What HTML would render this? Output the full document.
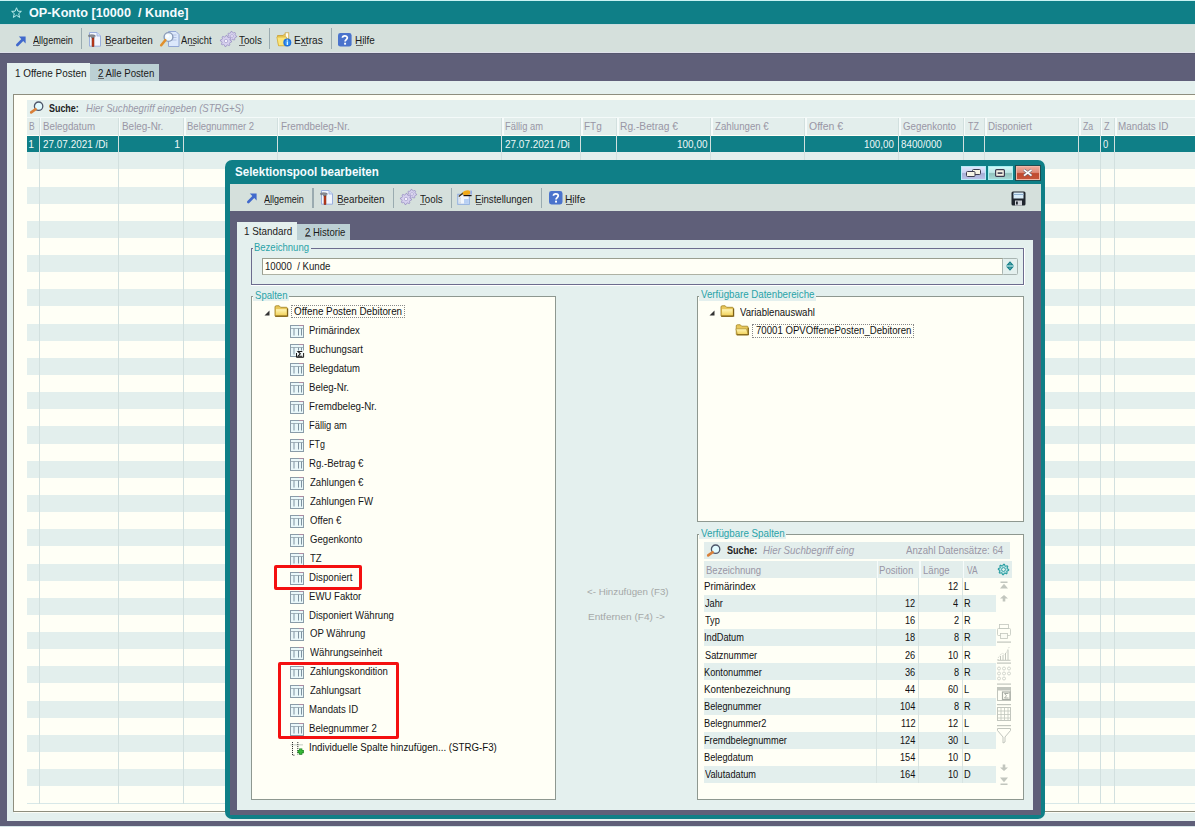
<!DOCTYPE html><html><head><meta charset="utf-8"><style>
*{margin:0;padding:0;box-sizing:border-box}
html,body{width:1195px;height:827px;overflow:hidden}
body{position:relative;background:#5f5f79;font-family:"Liberation Sans",sans-serif;font-size:10.5px;color:#1a1a1a}
.a{position:absolute}
.t{position:absolute;white-space:nowrap;line-height:1;transform-origin:0 0}
svg{position:absolute;overflow:visible}
</style></head><body>
<div class="a" style="left:0.00px;top:0.00px;width:1195.00px;height:1.00px;background:#c9f3f3"></div>
<div class="a" style="left:0.00px;top:1.00px;width:1195.00px;height:23.00px;background:#0f7f87"></div>
<svg style="left:11px;top:6.7px" width="11" height="11.3" viewBox="0 0 12 12"><polygon points="6,0.7 7.5,4.4 11.3,4.6 8.4,7.1 9.4,11.2 6,8.9 2.6,11.2 3.6,7.1 0.7,4.6 4.5,4.4" fill="none" stroke="#bff0ee" stroke-width="1.05" stroke-linejoin="round"/></svg>
<div class="t" style="left:29.00px;top:7.44px;font-size:12px;color:#f4fbff;font-weight:bold;transform:scaleX(1.0543);">OP-Konto [10000  / Kunde]</div>
<div class="a" style="left:0.00px;top:24.00px;width:1195.00px;height:1.00px;background:#cadde0"></div>
<div class="a" style="left:0.00px;top:25.00px;width:1195.00px;height:27.00px;background:#d5e0dc"></div>
<svg style="left:16px;top:35.5px" width="10" height="10" viewBox="0 0 10 10"><path d="M1.3 9 L6.8 3.5" stroke="#4169cc" stroke-width="2.6" stroke-linecap="round"/><path d="M2.8 0.6 H9.6 V7.4 Z" fill="#4169cc"/></svg>
<div class="t" style="left:32.60px;top:35.21px;font-size:10.5px;color:#1a1a1a;transform:scaleX(0.8652);">Allgemein</div>
<div class="a" style="left:33.00px;top:44.60px;width:7.00px;height:1.00px;background:#666"></div>
<div class="a" style="left:80.80px;top:28.00px;width:1.60px;height:21.00px;background:#9aabb0"></div>
<svg style="left:88px;top:31.5px" width="14" height="15" viewBox="0 0 14 15"><path d="M1.5 0.5 H9 L12.5 4 V14.2 H1.5 Z" fill="#f2f6ff" stroke="#9aaedc" stroke-width="1"/><path d="M9 0.5 V4 H12.5" fill="#cfe0f8" stroke="#9aaedc" stroke-width="0.8"/><path d="M0.5 3.2 Q3 2.2 6.5 3 L7.5 4.2 H6.2 V6 H3.5 V4.6 L0.8 4.8 Z" fill="#8a8e96" stroke="#5c6068" stroke-width="0.5"/><path d="M4 6 H6 V14.5 H4 Z" fill="#c23c1c" stroke="#7a2410" stroke-width="0.5"/></svg>
<div class="t" style="left:105.06px;top:35.21px;font-size:10.5px;color:#1a1a1a;transform:scaleX(0.9400);">Bearbeiten</div>
<div class="a" style="left:106.00px;top:44.60px;width:7.00px;height:1.00px;background:#666"></div>
<svg style="left:159.5px;top:30.5px" width="20" height="16" viewBox="0 0 20 16"><path d="M8.5 0.5 H16 L19 3.5 V15.5 H8.5 Z" fill="#dce8fb" stroke="#93a8d6"/><path d="M11 4 H16.5 M11 6.5 H16.5 M11 9 H16.5" stroke="#a8b8e0" stroke-width="0.8"/><circle cx="8.5" cy="6" r="4.4" fill="#eef8ff" stroke="#8a9ab8" stroke-width="1.4"/><circle cx="7.5" cy="5" r="1.6" fill="#ffffff"/><path d="M5.3 9.2 L1.2 14.2" stroke="#e0902e" stroke-width="2.6" stroke-linecap="round"/></svg>
<div class="t" style="left:180.50px;top:35.21px;font-size:10.5px;color:#1a1a1a;transform:scaleX(0.8857);">Ansicht</div>
<div class="a" style="left:188.50px;top:44.60px;width:6.00px;height:1.00px;background:#666"></div>
<svg style="left:220px;top:31px" width="17" height="16" viewBox="0 0 17 16"><path d="M16.60 5.00 L16.48 6.02 L15.06 6.48 L14.66 7.12 L14.87 8.60 L14.00 9.14 L12.76 8.31 L12.00 8.40 L10.98 9.48 L10.00 9.14 L9.88 7.66 L9.34 7.12 L7.86 7.00 L7.52 6.02 L8.60 5.00 L8.69 4.24 L7.86 3.00 L8.40 2.13 L9.88 2.34 L10.52 1.94 L10.98 0.52 L12.00 0.40 L12.76 1.69 L13.48 1.94 L14.87 1.40 L15.60 2.13 L15.06 3.52 L15.31 4.24 Z" fill="#d6d0ee" stroke="#9a92c4" stroke-width="0.8"/><circle cx="12" cy="5" r="1.4" fill="#f4f2fc" stroke="#9a92c4" stroke-width="0.6"/><path d="M11.60 10.00 L11.49 11.09 L9.88 11.61 L9.49 12.33 L9.96 13.96 L9.11 14.66 L7.61 13.88 L6.82 14.12 L6.00 15.60 L4.91 15.49 L4.39 13.88 L3.67 13.49 L2.04 13.96 L1.34 13.11 L2.12 11.61 L1.88 10.82 L0.40 10.00 L0.51 8.91 L2.12 8.39 L2.51 7.67 L2.04 6.04 L2.89 5.34 L4.39 6.12 L5.18 5.88 L6.00 4.40 L7.09 4.51 L7.61 6.12 L8.33 6.51 L9.96 6.04 L10.66 6.89 L9.88 8.39 L10.12 9.18 Z" fill="#d6d0ee" stroke="#9a92c4" stroke-width="0.8"/><circle cx="6" cy="10" r="1.7" fill="#f4f2fc" stroke="#9a92c4" stroke-width="0.6"/></svg>
<div class="t" style="left:239.00px;top:35.21px;font-size:10.5px;color:#1a1a1a;transform:scaleX(0.9292);">Tools</div>
<div class="a" style="left:239.00px;top:44.60px;width:6.00px;height:1.00px;background:#666"></div>
<div class="a" style="left:268.80px;top:28.00px;width:1.60px;height:21.00px;background:#9aabb0"></div>
<svg style="left:276px;top:32px" width="16" height="16" viewBox="0 0 16 16"><path d="M1.5 3.5 H7 L8.5 2.2 H12.5 V13.5 H2.5 Z" fill="#f0cf58" stroke="#c9a23a" stroke-width="0.9"/><rect x="9.2" y="0.8" width="3.6" height="6" fill="#fffdf0" stroke="#c9a23a" stroke-width="0.7"/><path d="M0.8 5 H10.5 L11.8 13.8 H2.6 Z" fill="#fbe57a" stroke="#d2ac38" stroke-width="0.7"/><circle cx="11.3" cy="10.5" r="4" fill="#1f72de"/><circle cx="11.3" cy="10.5" r="2.6" fill="#3590f0"/><rect x="10.7" y="9.4" width="1.3" height="3.6" fill="#d8f8ff"/><rect x="10.7" y="7.6" width="1.3" height="1.1" fill="#d8f8ff"/></svg>
<div class="t" style="left:293.53px;top:35.21px;font-size:10.5px;color:#1a1a1a;transform:scaleX(0.9655);">Extras</div>
<div class="a" style="left:301.00px;top:44.60px;width:6.00px;height:1.00px;background:#666"></div>
<div class="a" style="left:330.80px;top:28.00px;width:1.60px;height:21.00px;background:#9aabb0"></div>
<svg style="left:338.2px;top:32.8px" width="13.6" height="13.6" viewBox="0 0 14 14"><rect x="0" y="0" width="14" height="14" rx="2.5" fill="#4a73cc"/><path d="M4.6 5.0 C4.6 2.2 9.6 2.2 9.6 5.0 C9.6 6.8 7.3 6.9 7.3 8.8" fill="none" stroke="#fff" stroke-width="1.8"/><rect x="6.3" y="10" width="2" height="2" fill="#fff"/></svg>
<div class="t" style="left:355.06px;top:35.21px;font-size:10.5px;color:#1a1a1a;transform:scaleX(0.9400);">Hilfe</div>
<div class="a" style="left:356.00px;top:44.60px;width:7.00px;height:1.00px;background:#666"></div>
<div class="a" style="left:0.00px;top:52.00px;width:1195.00px;height:1.40px;background:#dfe0ea"></div>
<div class="a" style="left:0.00px;top:53.40px;width:1195.00px;height:1.00px;background:#56576f"></div>
<div class="a" style="left:7.00px;top:81.00px;width:1188.00px;height:740.00px;background:#e4f0ee"></div>
<div class="a" style="left:7.00px;top:62.80px;width:83.40px;height:19.00px;background:#e4f0ee"></div>
<div class="a" style="left:90.40px;top:64.30px;width:68.50px;height:17.00px;background:#bcd0d4"></div>
<div class="t" style="left:14.66px;top:67.51px;font-size:10.5px;color:#1a1a1a;transform:scaleX(0.9446);">1 Offene Posten</div>
<div class="t" style="left:98.00px;top:68.01px;font-size:10.5px;color:#1a1a1a;transform:scaleX(0.9180);">2 Alle Posten</div>
<div class="a" style="left:98.00px;top:77.50px;width:6.00px;height:1.00px;background:#666"></div>
<div class="a" style="left:0.00px;top:825.60px;width:1195.00px;height:1.40px;background:#d6e6e8"></div>
<div class="a" style="left:13.00px;top:94.00px;width:1182.00px;height:718.00px;background:#fffff6;border-left:1px solid #8e8e7e;border-top:1px solid #8e8e7e;border-bottom:1px solid #8e8e7e"></div>
<div class="a" style="left:27.00px;top:99.50px;width:1168.00px;height:17.00px;background:#e4f0ee"></div>
<svg style="left:30px;top:101.3px" width="14" height="12" viewBox="0 0 14 12"><circle cx="8.6" cy="5.2" r="4.2" fill="#e2fbff" stroke="#4e566a" stroke-width="1.3"/><path d="M5.6 8.2 L1.2 11.4" stroke="#d9803a" stroke-width="2.6" stroke-linecap="round"/></svg>
<div class="t" style="left:49.40px;top:102.61px;font-size:10.5px;color:#222;font-weight:bold;transform:scaleX(0.8500);">Suche:</div>
<div class="t" style="left:85.90px;top:102.61px;font-size:10.5px;color:#9a98a8;font-style:italic;transform:scaleX(0.9103);">Hier Suchbegriff eingeben (STRG+S)</div>
<div class="a" style="left:27.00px;top:117.00px;width:1168.00px;height:18.30px;background:#e3eeec;border-top:1px solid #f4faf9"></div>
<div class="a" style="left:27.00px;top:135.70px;width:1168.00px;height:16.54px;background:#0f7f87"></div>
<div class="a" style="left:27.00px;top:152.24px;width:1168.00px;height:17.14px;background:#e3efed"></div>
<div class="a" style="left:27.00px;top:186.51px;width:1168.00px;height:17.14px;background:#e3efed"></div>
<div class="a" style="left:27.00px;top:220.78px;width:1168.00px;height:17.14px;background:#e3efed"></div>
<div class="a" style="left:27.00px;top:255.05px;width:1168.00px;height:17.14px;background:#e3efed"></div>
<div class="a" style="left:27.00px;top:289.32px;width:1168.00px;height:17.14px;background:#e3efed"></div>
<div class="a" style="left:27.00px;top:323.60px;width:1168.00px;height:17.14px;background:#e3efed"></div>
<div class="a" style="left:27.00px;top:357.87px;width:1168.00px;height:17.14px;background:#e3efed"></div>
<div class="a" style="left:27.00px;top:392.14px;width:1168.00px;height:17.14px;background:#e3efed"></div>
<div class="a" style="left:27.00px;top:426.41px;width:1168.00px;height:17.14px;background:#e3efed"></div>
<div class="a" style="left:27.00px;top:460.68px;width:1168.00px;height:17.14px;background:#e3efed"></div>
<div class="a" style="left:27.00px;top:494.96px;width:1168.00px;height:17.14px;background:#e3efed"></div>
<div class="a" style="left:27.00px;top:529.23px;width:1168.00px;height:17.14px;background:#e3efed"></div>
<div class="a" style="left:27.00px;top:563.50px;width:1168.00px;height:17.14px;background:#e3efed"></div>
<div class="a" style="left:27.00px;top:597.77px;width:1168.00px;height:17.14px;background:#e3efed"></div>
<div class="a" style="left:27.00px;top:632.04px;width:1168.00px;height:17.14px;background:#e3efed"></div>
<div class="a" style="left:27.00px;top:666.32px;width:1168.00px;height:17.14px;background:#e3efed"></div>
<div class="a" style="left:27.00px;top:700.59px;width:1168.00px;height:17.14px;background:#e3efed"></div>
<div class="a" style="left:27.00px;top:734.86px;width:1168.00px;height:17.14px;background:#e3efed"></div>
<div class="a" style="left:27.00px;top:769.13px;width:1168.00px;height:17.14px;background:#e3efed"></div>
<div class="a" style="left:27.00px;top:802.90px;width:1168.00px;height:1.00px;background:#d8e8e8"></div>
<div class="a" style="left:14.00px;top:812.00px;width:1181.00px;height:1.00px;background:#fbfdf6"></div>
<div class="a" style="left:38.50px;top:117.50px;width:1.00px;height:686.40px;background:#d2e0df"></div>
<div class="a" style="left:39.50px;top:117.50px;width:1.50px;height:17.80px;background:#f6fbfa"></div>
<div class="a" style="left:117.80px;top:117.50px;width:1.00px;height:686.40px;background:#d2e0df"></div>
<div class="a" style="left:118.80px;top:117.50px;width:1.50px;height:17.80px;background:#f6fbfa"></div>
<div class="a" style="left:183.00px;top:117.50px;width:1.00px;height:686.40px;background:#d2e0df"></div>
<div class="a" style="left:184.00px;top:117.50px;width:1.50px;height:17.80px;background:#f6fbfa"></div>
<div class="a" style="left:276.90px;top:117.50px;width:1.00px;height:686.40px;background:#d2e0df"></div>
<div class="a" style="left:277.90px;top:117.50px;width:1.50px;height:17.80px;background:#f6fbfa"></div>
<div class="a" style="left:501.30px;top:117.50px;width:1.00px;height:686.40px;background:#d2e0df"></div>
<div class="a" style="left:502.30px;top:117.50px;width:1.50px;height:17.80px;background:#f6fbfa"></div>
<div class="a" style="left:580.20px;top:117.50px;width:1.00px;height:686.40px;background:#d2e0df"></div>
<div class="a" style="left:581.20px;top:117.50px;width:1.50px;height:17.80px;background:#f6fbfa"></div>
<div class="a" style="left:616.30px;top:117.50px;width:1.00px;height:686.40px;background:#d2e0df"></div>
<div class="a" style="left:617.30px;top:117.50px;width:1.50px;height:17.80px;background:#f6fbfa"></div>
<div class="a" style="left:710.00px;top:117.50px;width:1.00px;height:686.40px;background:#d2e0df"></div>
<div class="a" style="left:711.00px;top:117.50px;width:1.50px;height:17.80px;background:#f6fbfa"></div>
<div class="a" style="left:804.10px;top:117.50px;width:1.00px;height:686.40px;background:#d2e0df"></div>
<div class="a" style="left:805.10px;top:117.50px;width:1.50px;height:17.80px;background:#f6fbfa"></div>
<div class="a" style="left:898.00px;top:117.50px;width:1.00px;height:686.40px;background:#d2e0df"></div>
<div class="a" style="left:899.00px;top:117.50px;width:1.50px;height:17.80px;background:#f6fbfa"></div>
<div class="a" style="left:962.80px;top:117.50px;width:1.00px;height:686.40px;background:#d2e0df"></div>
<div class="a" style="left:963.80px;top:117.50px;width:1.50px;height:17.80px;background:#f6fbfa"></div>
<div class="a" style="left:984.10px;top:117.50px;width:1.00px;height:686.40px;background:#d2e0df"></div>
<div class="a" style="left:985.10px;top:117.50px;width:1.50px;height:17.80px;background:#f6fbfa"></div>
<div class="a" style="left:1078.00px;top:117.50px;width:1.00px;height:686.40px;background:#d2e0df"></div>
<div class="a" style="left:1079.00px;top:117.50px;width:1.50px;height:17.80px;background:#f6fbfa"></div>
<div class="a" style="left:1099.50px;top:117.50px;width:1.00px;height:686.40px;background:#d2e0df"></div>
<div class="a" style="left:1100.50px;top:117.50px;width:1.50px;height:17.80px;background:#f6fbfa"></div>
<div class="a" style="left:1114.20px;top:117.50px;width:1.00px;height:686.40px;background:#d2e0df"></div>
<div class="a" style="left:1115.20px;top:117.50px;width:1.50px;height:17.80px;background:#f6fbfa"></div>
<div class="t" style="left:28.97px;top:122.06px;font-size:10.2px;color:#9996a5;transform:scaleX(0.8333);">B</div>
<div class="t" style="left:42.54px;top:122.06px;font-size:10.2px;color:#9996a5;transform:scaleX(0.9566);">Belegdatum</div>
<div class="t" style="left:122.33px;top:122.06px;font-size:10.2px;color:#9996a5;transform:scaleX(0.9732);">Beleg-Nr.</div>
<div class="t" style="left:187.27px;top:122.06px;font-size:10.2px;color:#9996a5;transform:scaleX(0.9338);">Belegnummer 2</div>
<div class="t" style="left:280.73px;top:122.06px;font-size:10.2px;color:#9996a5;transform:scaleX(0.9710);">Fremdbeleg-Nr.</div>
<div class="t" style="left:504.68px;top:122.06px;font-size:10.2px;color:#9996a5;transform:scaleX(0.9175);">Fällig am</div>
<div class="t" style="left:583.72px;top:122.06px;font-size:10.2px;color:#9996a5;transform:scaleX(0.9765);">FTg</div>
<div class="t" style="left:620.10px;top:122.06px;font-size:10.2px;color:#9996a5;transform:scaleX(1.0035);">Rg.-Betrag €</div>
<div class="t" style="left:715.20px;top:122.06px;font-size:10.2px;color:#9996a5;transform:scaleX(0.9474);">Zahlungen €</div>
<div class="t" style="left:808.90px;top:122.06px;font-size:10.2px;color:#9996a5;transform:scaleX(1.0273);">Offen €</div>
<div class="t" style="left:902.50px;top:122.06px;font-size:10.2px;color:#9996a5;transform:scaleX(0.9545);">Gegenkonto</div>
<div class="t" style="left:967.80px;top:122.06px;font-size:10.2px;color:#9996a5;transform:scaleX(0.8750);">TZ</div>
<div class="t" style="left:988.14px;top:122.06px;font-size:10.2px;color:#9996a5;transform:scaleX(0.9600);">Disponiert</div>
<div class="t" style="left:1083.20px;top:122.06px;font-size:10.2px;color:#9996a5;transform:scaleX(0.8583);">Za</div>
<div class="t" style="left:1104.40px;top:122.06px;font-size:10.2px;color:#9996a5;transform:scaleX(0.9000);">Z</div>
<div class="t" style="left:1117.83px;top:122.06px;font-size:10.2px;color:#9996a5;transform:scaleX(0.9667);">Mandats ID</div>
<div class="t" style="left:28.20px;top:139.21px;font-size:10.5px;color:#eef8f8;">1</div>
<div class="t" style="left:42.80px;top:139.21px;font-size:10.5px;color:#eef8f8;transform:scaleX(0.9471);">27.07.2021 /Di</div>
<div class="t" style="left:174.20px;top:139.21px;font-size:10.5px;color:#eef8f8;">1</div>
<div class="t" style="left:504.60px;top:139.21px;font-size:10.5px;color:#eef8f8;transform:scaleX(0.9485);">27.07.2021 /Di</div>
<div class="t" style="left:676.85px;top:139.21px;font-size:10.5px;color:#eef8f8;transform:scaleX(0.9484);">100,00</div>
<div class="t" style="left:864.47px;top:139.21px;font-size:10.5px;color:#eef8f8;transform:scaleX(0.9290);">100,00</div>
<div class="t" style="left:901.00px;top:139.21px;font-size:10.5px;color:#eef8f8;transform:scaleX(0.9318);">8400/000</div>
<div class="t" style="left:1102.80px;top:139.21px;font-size:10.5px;color:#eef8f8;transform:scaleX(0.9000);">0</div>
<div class="a" style="left:225.00px;top:160.00px;width:820.00px;height:658.50px;background:#0f7f87;border-radius:7px"></div>
<div class="t" style="left:235.10px;top:165.74px;font-size:12px;color:#f4fbff;font-weight:bold;transform:scaleX(0.9631);">Selektionspool bearbeiten</div>
<div class="a" style="left:961px;top:166px;width:25px;height:14px;background:linear-gradient(#dfe6fc 0%,#cdd4f4 45%,#a6aed6 55%,#b9c1e8 100%);border:1px solid #b8ecf8"></div>
<svg style="left:966px;top:169px" width="15" height="8" viewBox="0 0 15 8"><rect x="6.5" y="0.5" width="8" height="5" rx="1" fill="#f6f4e6" stroke="#3c3c50"/><rect x="0.5" y="2.5" width="8.5" height="5" rx="1" fill="#f6f4e6" stroke="#3c3c50"/></svg>
<div class="a" style="left:988px;top:166px;width:25px;height:14px;background:linear-gradient(#cff6f6 0%,#bfe8e6 45%,#90c2bc 55%,#a8dad6 100%);border:1px solid #a8f0f0"></div>
<svg style="left:995px;top:169px" width="10" height="8" viewBox="0 0 10 8"><rect x="0.6" y="0.6" width="8.8" height="6.8" rx="1" fill="#f6f4e6" stroke="#3c3c50" stroke-width="1.2"/><rect x="2.6" y="3.3" width="4.8" height="1.6" fill="#3c3c50"/></svg>
<div class="a" style="left:1015.5px;top:166px;width:24.5px;height:14px;background:linear-gradient(#eaa898 0%,#de8a78 45%,#c04a30 55%,#c4543a 100%);border:1px solid #f0b8a8;outline:1px solid #1f4c50"></div>
<svg style="left:1023px;top:169px" width="9.5" height="7.5" viewBox="0 0 9.5 7.5"><path d="M1 0.8 L8.5 6.7 M8.5 0.8 L1 6.7" stroke="#6a6a78" stroke-width="2.8"/><path d="M1 0.8 L8.5 6.7 M8.5 0.8 L1 6.7" stroke="#fff" stroke-width="1.7"/></svg>
<div class="a" style="left:229.50px;top:183.50px;width:811.50px;height:27.50px;background:#d5e0dc"></div>
<div class="a" style="left:229.50px;top:211.00px;width:811.50px;height:603.50px;background:#5f5f79"></div>
<svg style="left:247px;top:193.3px" width="10" height="10" viewBox="0 0 10 10"><path d="M1.3 9 L6.8 3.5" stroke="#4169cc" stroke-width="2.6" stroke-linecap="round"/><path d="M2.8 0.6 H9.6 V7.4 Z" fill="#4169cc"/></svg>
<div class="t" style="left:264.30px;top:194.11px;font-size:10.5px;color:#1a1a1a;transform:scaleX(0.8630);">Allgemein</div>
<div class="a" style="left:264.50px;top:203.50px;width:7.00px;height:1.00px;background:#666"></div>
<div class="a" style="left:312.30px;top:187.50px;width:1.60px;height:20.00px;background:#9aabb0"></div>
<svg style="left:320px;top:190.2px" width="14" height="15" viewBox="0 0 14 15"><path d="M1.5 0.5 H9 L12.5 4 V14.2 H1.5 Z" fill="#f2f6ff" stroke="#9aaedc" stroke-width="1"/><path d="M9 0.5 V4 H12.5" fill="#cfe0f8" stroke="#9aaedc" stroke-width="0.8"/><path d="M0.5 3.2 Q3 2.2 6.5 3 L7.5 4.2 H6.2 V6 H3.5 V4.6 L0.8 4.8 Z" fill="#8a8e96" stroke="#5c6068" stroke-width="0.5"/><path d="M4 6 H6 V14.5 H4 Z" fill="#c23c1c" stroke="#7a2410" stroke-width="0.5"/></svg>
<div class="t" style="left:337.06px;top:194.11px;font-size:10.5px;color:#1a1a1a;transform:scaleX(0.9360);">Bearbeiten</div>
<div class="a" style="left:338.00px;top:203.50px;width:7.00px;height:1.00px;background:#666"></div>
<div class="a" style="left:392.80px;top:187.50px;width:1.60px;height:20.00px;background:#9aabb0"></div>
<svg style="left:399.5px;top:189px" width="17" height="16" viewBox="0 0 17 16"><path d="M16.60 5.00 L16.48 6.02 L15.06 6.48 L14.66 7.12 L14.87 8.60 L14.00 9.14 L12.76 8.31 L12.00 8.40 L10.98 9.48 L10.00 9.14 L9.88 7.66 L9.34 7.12 L7.86 7.00 L7.52 6.02 L8.60 5.00 L8.69 4.24 L7.86 3.00 L8.40 2.13 L9.88 2.34 L10.52 1.94 L10.98 0.52 L12.00 0.40 L12.76 1.69 L13.48 1.94 L14.87 1.40 L15.60 2.13 L15.06 3.52 L15.31 4.24 Z" fill="#d6d0ee" stroke="#9a92c4" stroke-width="0.8"/><circle cx="12" cy="5" r="1.4" fill="#f4f2fc" stroke="#9a92c4" stroke-width="0.6"/><path d="M11.60 10.00 L11.49 11.09 L9.88 11.61 L9.49 12.33 L9.96 13.96 L9.11 14.66 L7.61 13.88 L6.82 14.12 L6.00 15.60 L4.91 15.49 L4.39 13.88 L3.67 13.49 L2.04 13.96 L1.34 13.11 L2.12 11.61 L1.88 10.82 L0.40 10.00 L0.51 8.91 L2.12 8.39 L2.51 7.67 L2.04 6.04 L2.89 5.34 L4.39 6.12 L5.18 5.88 L6.00 4.40 L7.09 4.51 L7.61 6.12 L8.33 6.51 L9.96 6.04 L10.66 6.89 L9.88 8.39 L10.12 9.18 Z" fill="#d6d0ee" stroke="#9a92c4" stroke-width="0.8"/><circle cx="6" cy="10" r="1.7" fill="#f4f2fc" stroke="#9a92c4" stroke-width="0.6"/></svg>
<div class="t" style="left:420.00px;top:194.11px;font-size:10.5px;color:#1a1a1a;transform:scaleX(0.9250);">Tools</div>
<div class="a" style="left:420.00px;top:203.50px;width:6.00px;height:1.00px;background:#666"></div>
<div class="a" style="left:450.80px;top:187.50px;width:1.60px;height:20.00px;background:#9aabb0"></div>
<svg style="left:457px;top:189.5px" width="16" height="15" viewBox="0 0 16 15"><rect x="0.8" y="4.3" width="11.5" height="10" fill="#f2f6fc" stroke="#90aee0" stroke-width="1.1"/><rect x="7" y="9" width="4.8" height="4.8" fill="#b8d0f4"/><path d="M3 8 V13 M2 8 H4 M2 13 H4" stroke="#c8d0d8" stroke-width="0.8"/><path d="M1.8 6.6 L6.5 2.8" stroke="#3a2a10" stroke-width="1.3"/><ellipse cx="9.6" cy="2.8" rx="4" ry="2.3" fill="#f0a818" transform="rotate(-12 9.6 2.8)"/><path d="M6.5 5.6 H14.6" stroke="#1a1010" stroke-width="1.2"/><rect x="13.3" y="0.6" width="1.6" height="4" fill="#90a8e8"/></svg>
<div class="t" style="left:474.79px;top:194.11px;font-size:10.5px;color:#1a1a1a;transform:scaleX(0.9129);">Einstellungen</div>
<div class="a" style="left:476.00px;top:203.50px;width:6.00px;height:1.00px;background:#666"></div>
<div class="a" style="left:540.80px;top:187.50px;width:1.60px;height:20.00px;background:#9aabb0"></div>
<svg style="left:548.7px;top:191px" width="13.5" height="13.5" viewBox="0 0 14 14"><rect x="0" y="0" width="14" height="14" rx="2.5" fill="#4a73cc"/><path d="M4.6 5.0 C4.6 2.2 9.6 2.2 9.6 5.0 C9.6 6.8 7.3 6.9 7.3 8.8" fill="none" stroke="#fff" stroke-width="1.8"/><rect x="6.3" y="10" width="2" height="2" fill="#fff"/></svg>
<div class="t" style="left:564.74px;top:194.11px;font-size:10.5px;color:#1a1a1a;transform:scaleX(0.9650);">Hilfe</div>
<div class="a" style="left:566.00px;top:203.50px;width:7.00px;height:1.00px;background:#666"></div>
<svg style="left:1011px;top:191.4px" width="15" height="15" viewBox="0 0 15 15"><rect x="0.5" y="0.5" width="14" height="14" rx="1.5" fill="#20262e"/><rect x="2.5" y="1.5" width="10" height="6" fill="#d8ecf8"/><rect x="2.5" y="3" width="10" height="1" fill="#8fb0d0"/><rect x="4" y="9.5" width="7" height="5" fill="#d0d4da"/><rect x="5" y="10.5" width="1.8" height="3" fill="#20262e"/></svg>
<div class="a" style="left:237.00px;top:239.50px;width:795.70px;height:570.00px;background:#e4f0ee"></div>
<div class="a" style="left:237.00px;top:221.70px;width:60.40px;height:19.00px;background:#e4f0ee"></div>
<div class="a" style="left:297.40px;top:223.50px;width:52.30px;height:16.00px;background:#bcd0d4"></div>
<div class="t" style="left:244.06px;top:226.21px;font-size:10.5px;color:#1a1a1a;transform:scaleX(0.9400);">1 Standard</div>
<div class="t" style="left:305.00px;top:226.81px;font-size:10.5px;color:#1a1a1a;transform:scaleX(0.9091);">2 Historie</div>
<div class="a" style="left:305.00px;top:236.30px;width:6.00px;height:1.00px;background:#666"></div>
<div class="a" style="left:251.00px;top:248.00px;width:773.00px;height:36.70px;border:1px solid #6c6c8e;"></div>
<div class="a" style="left:1024.00px;top:248.00px;width:1.00px;height:37.00px;background:#ffffff"></div>
<div class="a" style="left:251.00px;top:284.70px;width:773.00px;height:1.00px;background:#ffffff"></div>
<div class="a" style="left:252.90px;top:243.00px;width:58.10px;height:10.00px;background:#e4f0ee"></div>
<div class="t" style="left:253.97px;top:242.86px;font-size:10.2px;color:#2aa3a8;transform:scaleX(0.9328);">Bezeichnung</div>
<div class="a" style="left:262.00px;top:258.00px;width:741.00px;height:16.50px;background:#fffff6;border:1px solid #aeb2a4;border-top-color:#9a9e90;border-left-color:#9a9e90;border-right:none"></div>
<div class="a" style="left:1002.00px;top:258.00px;width:16.00px;height:16.50px;background:#e4f0ee;border:1.2px solid #a9b5b2;border-radius:1.5px"></div>
<svg style="left:1006px;top:261px" width="8" height="10" viewBox="0 0 8 10"><path d="M4 0.2 L7.9 4.6 H0.1 Z M0.1 5.4 H7.9 L4 9.8 Z" fill="#127e86"/><path d="M0.4 4.2 H7.6 V5.8 H0.4 Z" fill="#84c4c8"/><path d="M2.5 3.5 L4 1.8 L5.5 3.5 Z M2.5 6.5 H5.5 L4 8.2 Z" fill="#5aa8ae"/></svg>
<div class="t" style="left:265.05px;top:261.66px;font-size:10.2px;color:#1a1a1a;transform:scaleX(0.9471);">10000  / Kunde</div>
<div class="a" style="left:251.00px;top:295.80px;width:304.70px;height:504.30px;border:1px solid #8e9890;background:#fffff6;"></div>
<div class="a" style="left:253.00px;top:291.30px;width:36.00px;height:10.00px;background:#e4f0ee"></div>
<div class="t" style="left:255.00px;top:291.16px;font-size:10.2px;color:#2aa3a8;transform:scaleX(0.9412);">Spalten</div>
<svg style="left:263.5px;top:309.5px" width="6" height="6" viewBox="0 0 6 6"><path d="M5.5 0.5 V5.5 H0.5 Z" fill="#333"/></svg>
<svg style="left:274.2px;top:305px" width="15" height="12" viewBox="0 0 15 12"><defs><linearGradient id="fg1" x1="0" y1="0" x2="0" y2="1"><stop offset="0" stop-color="#fff6b8"/><stop offset="1" stop-color="#f2d25a"/></linearGradient></defs><path d="M1 2 Q1 0.8 2.2 0.8 H5.2 L6.6 2.3 H12.3 Q13.3 2.3 13.3 3.3 V10.6 Q13.3 11.4 12.5 11.4 H1.8 Q1 11.4 1 10.6 Z" fill="#e9c75a" stroke="#a88a2c" stroke-width="0.9"/><path d="M2 4.2 H12.6 V10.5 H2 Z" fill="url(#fg1)"/><path d="M1.2 11.2 H13.6 V3.6" fill="none" stroke="#7d6018" stroke-width="1.2"/></svg>
<div class="a" style="left:291.10px;top:305.40px;width:113.80px;height:12.60px;border:1px dotted #888"></div>
<div class="t" style="left:293.80px;top:307.23px;font-size:10px;color:#111;transform:scaleX(0.9836);">Offene Posten Debitoren</div>
<svg style="left:290px;top:325.1px" width="14" height="13" viewBox="0 0 14 13"><rect x="0.5" y="0.5" width="13" height="12" fill="#eaf8fa" stroke="#8a9ca8"/><path d="M9 0.5 H13.5" stroke="#b08aa0" stroke-width="1"/><path d="M1 3.5 H13" stroke="#a4b4bc" stroke-width="1"/><path d="M4 3.5 V10.5 M8.5 3.5 V10.5 M11.5 3.5 V10.5" stroke="#7e92a0" stroke-width="1"/></svg>
<div class="t" style="left:308.95px;top:326.13px;font-size:10px;color:#161616;transform:scaleX(0.9519);">Primärindex</div>
<svg style="left:290px;top:344.06px" width="14" height="13" viewBox="0 0 14 13"><rect x="0.5" y="0.5" width="13" height="12" fill="#eaf8fa" stroke="#8a9ca8"/><path d="M9 0.5 H13.5" stroke="#b08aa0" stroke-width="1"/><path d="M1 3.5 H13" stroke="#a4b4bc" stroke-width="1"/><path d="M4 3.5 V10.5 M8.5 3.5 V10.5 M11.5 3.5 V10.5" stroke="#7e92a0" stroke-width="1"/><rect x="6" y="6.5" width="8" height="7" fill="#f4f8f8"/><path d="M12.3 7.5 H8 L10.3 9.8 L8 12.2 H12.3" fill="none" stroke="#1a1a1a" stroke-width="1.1"/><path d="M6.5 9 V13.3 H13.6 V9" fill="none" stroke="#1a1a1a" stroke-width="1"/></svg>
<div class="t" style="left:308.94px;top:345.09px;font-size:10px;color:#161616;transform:scaleX(0.9600);">Buchungsart</div>
<svg style="left:290px;top:363.02000000000004px" width="14" height="13" viewBox="0 0 14 13"><rect x="0.5" y="0.5" width="13" height="12" fill="#eaf8fa" stroke="#8a9ca8"/><path d="M9 0.5 H13.5" stroke="#b08aa0" stroke-width="1"/><path d="M1 3.5 H13" stroke="#a4b4bc" stroke-width="1"/><path d="M4 3.5 V10.5 M8.5 3.5 V10.5 M11.5 3.5 V10.5" stroke="#7e92a0" stroke-width="1"/></svg>
<div class="t" style="left:308.95px;top:364.05px;font-size:10px;color:#161616;transform:scaleX(0.9538);">Belegdatum</div>
<svg style="left:290px;top:381.98px" width="14" height="13" viewBox="0 0 14 13"><rect x="0.5" y="0.5" width="13" height="12" fill="#eaf8fa" stroke="#8a9ca8"/><path d="M9 0.5 H13.5" stroke="#b08aa0" stroke-width="1"/><path d="M1 3.5 H13" stroke="#a4b4bc" stroke-width="1"/><path d="M4 3.5 V10.5 M8.5 3.5 V10.5 M11.5 3.5 V10.5" stroke="#7e92a0" stroke-width="1"/></svg>
<div class="t" style="left:308.94px;top:383.01px;font-size:10px;color:#161616;transform:scaleX(0.9600);">Beleg-Nr.</div>
<svg style="left:290px;top:400.94000000000005px" width="14" height="13" viewBox="0 0 14 13"><rect x="0.5" y="0.5" width="13" height="12" fill="#eaf8fa" stroke="#8a9ca8"/><path d="M9 0.5 H13.5" stroke="#b08aa0" stroke-width="1"/><path d="M1 3.5 H13" stroke="#a4b4bc" stroke-width="1"/><path d="M4 3.5 V10.5 M8.5 3.5 V10.5 M11.5 3.5 V10.5" stroke="#7e92a0" stroke-width="1"/></svg>
<div class="t" style="left:308.92px;top:401.97px;font-size:10px;color:#161616;transform:scaleX(0.9750);">Fremdbeleg-Nr.</div>
<svg style="left:290px;top:419.90000000000003px" width="14" height="13" viewBox="0 0 14 13"><rect x="0.5" y="0.5" width="13" height="12" fill="#eaf8fa" stroke="#8a9ca8"/><path d="M9 0.5 H13.5" stroke="#b08aa0" stroke-width="1"/><path d="M1 3.5 H13" stroke="#a4b4bc" stroke-width="1"/><path d="M4 3.5 V10.5 M8.5 3.5 V10.5 M11.5 3.5 V10.5" stroke="#7e92a0" stroke-width="1"/></svg>
<div class="t" style="left:308.97px;top:420.93px;font-size:10px;color:#161616;transform:scaleX(0.9333);">Fällig am</div>
<svg style="left:290px;top:438.86px" width="14" height="13" viewBox="0 0 14 13"><rect x="0.5" y="0.5" width="13" height="12" fill="#eaf8fa" stroke="#8a9ca8"/><path d="M9 0.5 H13.5" stroke="#b08aa0" stroke-width="1"/><path d="M1 3.5 H13" stroke="#a4b4bc" stroke-width="1"/><path d="M4 3.5 V10.5 M8.5 3.5 V10.5 M11.5 3.5 V10.5" stroke="#7e92a0" stroke-width="1"/></svg>
<div class="t" style="left:309.01px;top:439.89px;font-size:10px;color:#161616;transform:scaleX(0.8941);">FTg</div>
<svg style="left:290px;top:457.82000000000005px" width="14" height="13" viewBox="0 0 14 13"><rect x="0.5" y="0.5" width="13" height="12" fill="#eaf8fa" stroke="#8a9ca8"/><path d="M9 0.5 H13.5" stroke="#b08aa0" stroke-width="1"/><path d="M1 3.5 H13" stroke="#a4b4bc" stroke-width="1"/><path d="M4 3.5 V10.5 M8.5 3.5 V10.5 M11.5 3.5 V10.5" stroke="#7e92a0" stroke-width="1"/></svg>
<div class="t" style="left:308.94px;top:458.85px;font-size:10px;color:#161616;transform:scaleX(0.9600);">Rg.-Betrag €</div>
<svg style="left:290px;top:476.78000000000003px" width="14" height="13" viewBox="0 0 14 13"><rect x="0.5" y="0.5" width="13" height="12" fill="#eaf8fa" stroke="#8a9ca8"/><path d="M9 0.5 H13.5" stroke="#b08aa0" stroke-width="1"/><path d="M1 3.5 H13" stroke="#a4b4bc" stroke-width="1"/><path d="M4 3.5 V10.5 M8.5 3.5 V10.5 M11.5 3.5 V10.5" stroke="#7e92a0" stroke-width="1"/></svg>
<div class="t" style="left:309.90px;top:477.81px;font-size:10px;color:#161616;transform:scaleX(0.9600);">Zahlungen €</div>
<svg style="left:290px;top:495.74px" width="14" height="13" viewBox="0 0 14 13"><rect x="0.5" y="0.5" width="13" height="12" fill="#eaf8fa" stroke="#8a9ca8"/><path d="M9 0.5 H13.5" stroke="#b08aa0" stroke-width="1"/><path d="M1 3.5 H13" stroke="#a4b4bc" stroke-width="1"/><path d="M4 3.5 V10.5 M8.5 3.5 V10.5 M11.5 3.5 V10.5" stroke="#7e92a0" stroke-width="1"/></svg>
<div class="t" style="left:309.90px;top:496.77px;font-size:10px;color:#161616;transform:scaleX(0.9600);">Zahlungen FW</div>
<svg style="left:290px;top:514.7px" width="14" height="13" viewBox="0 0 14 13"><rect x="0.5" y="0.5" width="13" height="12" fill="#eaf8fa" stroke="#8a9ca8"/><path d="M9 0.5 H13.5" stroke="#b08aa0" stroke-width="1"/><path d="M1 3.5 H13" stroke="#a4b4bc" stroke-width="1"/><path d="M4 3.5 V10.5 M8.5 3.5 V10.5 M11.5 3.5 V10.5" stroke="#7e92a0" stroke-width="1"/></svg>
<div class="t" style="left:309.90px;top:515.73px;font-size:10px;color:#161616;transform:scaleX(0.9600);">Offen €</div>
<svg style="left:290px;top:533.66px" width="14" height="13" viewBox="0 0 14 13"><rect x="0.5" y="0.5" width="13" height="12" fill="#eaf8fa" stroke="#8a9ca8"/><path d="M9 0.5 H13.5" stroke="#b08aa0" stroke-width="1"/><path d="M1 3.5 H13" stroke="#a4b4bc" stroke-width="1"/><path d="M4 3.5 V10.5 M8.5 3.5 V10.5 M11.5 3.5 V10.5" stroke="#7e92a0" stroke-width="1"/></svg>
<div class="t" style="left:309.90px;top:534.69px;font-size:10px;color:#161616;transform:scaleX(0.9600);">Gegenkonto</div>
<svg style="left:290px;top:552.62px" width="14" height="13" viewBox="0 0 14 13"><rect x="0.5" y="0.5" width="13" height="12" fill="#eaf8fa" stroke="#8a9ca8"/><path d="M9 0.5 H13.5" stroke="#b08aa0" stroke-width="1"/><path d="M1 3.5 H13" stroke="#a4b4bc" stroke-width="1"/><path d="M4 3.5 V10.5 M8.5 3.5 V10.5 M11.5 3.5 V10.5" stroke="#7e92a0" stroke-width="1"/></svg>
<div class="t" style="left:309.90px;top:553.65px;font-size:10px;color:#161616;transform:scaleX(0.9600);">TZ</div>
<svg style="left:290px;top:571.58px" width="14" height="13" viewBox="0 0 14 13"><rect x="0.5" y="0.5" width="13" height="12" fill="#eaf8fa" stroke="#8a9ca8"/><path d="M9 0.5 H13.5" stroke="#b08aa0" stroke-width="1"/><path d="M1 3.5 H13" stroke="#a4b4bc" stroke-width="1"/><path d="M4 3.5 V10.5 M8.5 3.5 V10.5 M11.5 3.5 V10.5" stroke="#7e92a0" stroke-width="1"/></svg>
<div class="t" style="left:308.94px;top:572.61px;font-size:10px;color:#161616;transform:scaleX(0.9636);">Disponiert</div>
<svg style="left:290px;top:590.5400000000001px" width="14" height="13" viewBox="0 0 14 13"><rect x="0.5" y="0.5" width="13" height="12" fill="#eaf8fa" stroke="#8a9ca8"/><path d="M9 0.5 H13.5" stroke="#b08aa0" stroke-width="1"/><path d="M1 3.5 H13" stroke="#a4b4bc" stroke-width="1"/><path d="M4 3.5 V10.5 M8.5 3.5 V10.5 M11.5 3.5 V10.5" stroke="#7e92a0" stroke-width="1"/></svg>
<div class="t" style="left:308.94px;top:591.57px;font-size:10px;color:#161616;transform:scaleX(0.9600);">EWU Faktor</div>
<svg style="left:290px;top:609.5000000000001px" width="14" height="13" viewBox="0 0 14 13"><rect x="0.5" y="0.5" width="13" height="12" fill="#eaf8fa" stroke="#8a9ca8"/><path d="M9 0.5 H13.5" stroke="#b08aa0" stroke-width="1"/><path d="M1 3.5 H13" stroke="#a4b4bc" stroke-width="1"/><path d="M4 3.5 V10.5 M8.5 3.5 V10.5 M11.5 3.5 V10.5" stroke="#7e92a0" stroke-width="1"/></svg>
<div class="t" style="left:308.94px;top:610.53px;font-size:10px;color:#161616;transform:scaleX(0.9600);">Disponiert Währung</div>
<svg style="left:290px;top:628.46px" width="14" height="13" viewBox="0 0 14 13"><rect x="0.5" y="0.5" width="13" height="12" fill="#eaf8fa" stroke="#8a9ca8"/><path d="M9 0.5 H13.5" stroke="#b08aa0" stroke-width="1"/><path d="M1 3.5 H13" stroke="#a4b4bc" stroke-width="1"/><path d="M4 3.5 V10.5 M8.5 3.5 V10.5 M11.5 3.5 V10.5" stroke="#7e92a0" stroke-width="1"/></svg>
<div class="t" style="left:309.90px;top:629.49px;font-size:10px;color:#161616;transform:scaleX(0.9600);">OP Währung</div>
<svg style="left:290px;top:647.42px" width="14" height="13" viewBox="0 0 14 13"><rect x="0.5" y="0.5" width="13" height="12" fill="#eaf8fa" stroke="#8a9ca8"/><path d="M9 0.5 H13.5" stroke="#b08aa0" stroke-width="1"/><path d="M1 3.5 H13" stroke="#a4b4bc" stroke-width="1"/><path d="M4 3.5 V10.5 M8.5 3.5 V10.5 M11.5 3.5 V10.5" stroke="#7e92a0" stroke-width="1"/></svg>
<div class="t" style="left:309.90px;top:648.45px;font-size:10px;color:#161616;transform:scaleX(0.9600);">Währungseinheit</div>
<svg style="left:290px;top:666.38px" width="14" height="13" viewBox="0 0 14 13"><rect x="0.5" y="0.5" width="13" height="12" fill="#eaf8fa" stroke="#8a9ca8"/><path d="M9 0.5 H13.5" stroke="#b08aa0" stroke-width="1"/><path d="M1 3.5 H13" stroke="#a4b4bc" stroke-width="1"/><path d="M4 3.5 V10.5 M8.5 3.5 V10.5 M11.5 3.5 V10.5" stroke="#7e92a0" stroke-width="1"/></svg>
<div class="t" style="left:309.90px;top:667.41px;font-size:10px;color:#161616;transform:scaleX(0.9600);">Zahlungskondition</div>
<svg style="left:290px;top:685.34px" width="14" height="13" viewBox="0 0 14 13"><rect x="0.5" y="0.5" width="13" height="12" fill="#eaf8fa" stroke="#8a9ca8"/><path d="M9 0.5 H13.5" stroke="#b08aa0" stroke-width="1"/><path d="M1 3.5 H13" stroke="#a4b4bc" stroke-width="1"/><path d="M4 3.5 V10.5 M8.5 3.5 V10.5 M11.5 3.5 V10.5" stroke="#7e92a0" stroke-width="1"/></svg>
<div class="t" style="left:309.90px;top:686.37px;font-size:10px;color:#161616;transform:scaleX(0.9600);">Zahlungsart</div>
<svg style="left:290px;top:704.3000000000001px" width="14" height="13" viewBox="0 0 14 13"><rect x="0.5" y="0.5" width="13" height="12" fill="#eaf8fa" stroke="#8a9ca8"/><path d="M9 0.5 H13.5" stroke="#b08aa0" stroke-width="1"/><path d="M1 3.5 H13" stroke="#a4b4bc" stroke-width="1"/><path d="M4 3.5 V10.5 M8.5 3.5 V10.5 M11.5 3.5 V10.5" stroke="#7e92a0" stroke-width="1"/></svg>
<div class="t" style="left:308.94px;top:705.33px;font-size:10px;color:#161616;transform:scaleX(0.9600);">Mandats ID</div>
<svg style="left:290px;top:723.2600000000001px" width="14" height="13" viewBox="0 0 14 13"><rect x="0.5" y="0.5" width="13" height="12" fill="#eaf8fa" stroke="#8a9ca8"/><path d="M9 0.5 H13.5" stroke="#b08aa0" stroke-width="1"/><path d="M1 3.5 H13" stroke="#a4b4bc" stroke-width="1"/><path d="M4 3.5 V10.5 M8.5 3.5 V10.5 M11.5 3.5 V10.5" stroke="#7e92a0" stroke-width="1"/></svg>
<div class="t" style="left:308.94px;top:724.29px;font-size:10px;color:#161616;transform:scaleX(0.9600);">Belegnummer 2</div>
<svg style="left:289px;top:740.62px" width="16" height="16" viewBox="0 0 16 16"><path d="M1.5 3.8 H14" stroke="#d4d8d0" stroke-width="1.4"/><path d="M3.5 1 V14.2 H6 M8.8 1 V13.5" fill="none" stroke="#333" stroke-width="1" stroke-dasharray="1.1 0.9"/><path d="M8.6 10.6 H14.8 M11.7 7.5 V13.7" stroke="#137a18" stroke-width="3.2"/><path d="M9.2 10.6 H14.2 M11.7 8.1 V13.1" stroke="#38b838" stroke-width="2"/></svg>
<div class="t" style="left:309.03px;top:743.25px;font-size:10px;color:#111;transform:scaleX(0.9708);">Individuelle Spalte hinzufügen... (STRG-F3)</div>
<div class="a" style="left:274.00px;top:565.00px;width:88.00px;height:25.00px;border:3px solid #f41010;border-radius:2px"></div>
<div class="a" style="left:278.00px;top:661.50px;width:121.00px;height:77.50px;border:3px solid #f41010;border-radius:2px"></div>
<div class="t" style="left:587.00px;top:586.80px;font-size:9.8px;color:#a4a8a8;transform:scaleX(0.9951);">&lt;- Hinzufügen (F3)</div>
<div class="t" style="left:587.70px;top:611.90px;font-size:9.8px;color:#a4a8a8;transform:scaleX(1.0280);">Entfernen (F4) -&gt;</div>
<div class="a" style="left:696.90px;top:296.10px;width:327.00px;height:225.90px;border:1px solid #8e9890;background:#fffff6;"></div>
<div class="a" style="left:698.80px;top:290.60px;width:117.50px;height:10.00px;background:#e4f0ee"></div>
<div class="t" style="left:700.80px;top:290.46px;font-size:10.2px;color:#2aa3a8;transform:scaleX(0.9538);">Verfügbare Datenbereiche</div>
<svg style="left:709.4px;top:309.7px" width="6" height="6" viewBox="0 0 6 6"><path d="M5.5 0.5 V5.5 H0.5 Z" fill="#333"/></svg>
<svg style="left:719.5px;top:305.2px" width="15" height="12" viewBox="0 0 15 12"><defs><linearGradient id="fg2" x1="0" y1="0" x2="0" y2="1"><stop offset="0" stop-color="#fff6b8"/><stop offset="1" stop-color="#f2d25a"/></linearGradient></defs><path d="M1 2 Q1 0.8 2.2 0.8 H5.2 L6.6 2.3 H12.3 Q13.3 2.3 13.3 3.3 V10.6 Q13.3 11.4 12.5 11.4 H1.8 Q1 11.4 1 10.6 Z" fill="#e9c75a" stroke="#a88a2c" stroke-width="0.9"/><path d="M2 4.2 H12.6 V10.5 H2 Z" fill="url(#fg2)"/><path d="M1.2 11.2 H13.6 V3.6" fill="none" stroke="#7d6018" stroke-width="1.2"/></svg>
<div class="t" style="left:739.60px;top:307.53px;font-size:10px;color:#111;transform:scaleX(0.9577);">Variablenauswahl</div>
<svg style="left:735px;top:324.2px" width="15" height="11.5" viewBox="0 0 15 12"><defs><linearGradient id="fg3" x1="0" y1="0" x2="0" y2="1"><stop offset="0" stop-color="#fff6b8"/><stop offset="1" stop-color="#f2d25a"/></linearGradient></defs><path d="M1 2 Q1 0.8 2.2 0.8 H5.2 L6.6 2.3 H12.3 Q13.3 2.3 13.3 3.3 V10.6 Q13.3 11.4 12.5 11.4 H1.8 Q1 11.4 1 10.6 Z" fill="#e9c75a" stroke="#a88a2c" stroke-width="0.9"/><path d="M0.6 5 H11.6 L13.6 11 H2.2 Z" fill="url(#fg3)" stroke="#a88a2c" stroke-width="0.7"/><path d="M1.6 11.3 H13.6 V4" fill="none" stroke="#7d6018" stroke-width="1.1"/></svg>
<div class="a" style="left:752.40px;top:323.60px;width:161.60px;height:14.10px;border:1px dotted #888"></div>
<div class="t" style="left:755.60px;top:325.73px;font-size:10px;color:#111;transform:scaleX(0.9621);">70001 OPVOffenePosten_Debitoren</div>
<div class="a" style="left:696.80px;top:534.30px;width:327.10px;height:265.80px;border:1px solid #8e9890;background:#fffff6;"></div>
<div class="a" style="left:698.70px;top:528.70px;width:87.50px;height:10.00px;background:#e4f0ee"></div>
<div class="t" style="left:700.70px;top:528.56px;font-size:10.2px;color:#2aa3a8;transform:scaleX(0.9598);">Verfügbare Spalten</div>
<div class="a" style="left:704.30px;top:541.90px;width:305.50px;height:17.40px;background:#e3eeec"></div>
<svg style="left:707px;top:544.2px" width="14" height="12" viewBox="0 0 14 12"><circle cx="8.6" cy="5.2" r="4.2" fill="#e2fbff" stroke="#4e566a" stroke-width="1.3"/><path d="M5.6 8.2 L1.2 11.4" stroke="#d9803a" stroke-width="2.6" stroke-linecap="round"/></svg>
<div class="t" style="left:726.60px;top:545.21px;font-size:10.5px;color:#222;font-weight:bold;transform:scaleX(0.8647);">Suche:</div>
<div class="t" style="left:762.80px;top:545.21px;font-size:10.5px;color:#9a98a8;font-style:italic;transform:scaleX(0.9296);">Hier Suchbegriff eing</div>
<div class="t" style="left:906.20px;top:546.46px;font-size:10.2px;color:#9996a5;transform:scaleX(0.9485);">Anzahl Datensätze: 64</div>
<div class="a" style="left:704.30px;top:561.20px;width:307.70px;height:16.80px;background:#e3eeec"></div>
<div class="a" style="left:876.60px;top:561.20px;width:1.50px;height:16.80px;background:#f6fbfa"></div>
<div class="a" style="left:919.40px;top:561.20px;width:1.50px;height:16.80px;background:#f6fbfa"></div>
<div class="a" style="left:962.90px;top:561.20px;width:1.50px;height:16.80px;background:#f6fbfa"></div>
<div class="t" style="left:705.76px;top:565.66px;font-size:10.2px;color:#9996a5;transform:scaleX(0.9362);">Bezeichnung</div>
<div class="t" style="left:878.85px;top:565.76px;font-size:10.2px;color:#9996a5;transform:scaleX(0.9457);">Position</div>
<div class="t" style="left:922.66px;top:565.76px;font-size:10.2px;color:#9996a5;transform:scaleX(0.9407);">Länge</div>
<div class="t" style="left:967.10px;top:565.76px;font-size:10.2px;color:#9996a5;transform:scaleX(0.8231);">VA</div>
<svg style="left:997.5px;top:563.5px" width="11" height="11" viewBox="0 0 11 11"><path d="M10.70 5.50 L10.60 6.51 L9.10 6.99 L8.74 7.67 L9.18 9.18 L8.39 9.82 L6.99 9.10 L6.26 9.33 L5.50 10.70 L4.49 10.60 L4.01 9.10 L3.33 8.74 L1.82 9.18 L1.18 8.39 L1.90 6.99 L1.67 6.26 L0.30 5.50 L0.40 4.49 L1.90 4.01 L2.26 3.33 L1.82 1.82 L2.61 1.18 L4.01 1.90 L4.74 1.67 L5.50 0.30 L6.51 0.40 L6.99 1.90 L7.67 2.26 L9.18 1.82 L9.82 2.61 L9.10 4.01 L9.33 4.74 Z" fill="#bfe6e6" stroke="#2a9ea2" stroke-width="1.1" stroke-linejoin="round"/><circle cx="5.5" cy="5.5" r="1.9" fill="#e8f4f2" stroke="#2a9ea2" stroke-width="1"/></svg>
<div class="a" style="left:704.30px;top:594.83px;width:291.70px;height:17.13px;background:#e3efed"></div>
<div class="a" style="left:704.30px;top:629.09px;width:291.70px;height:17.13px;background:#e3efed"></div>
<div class="a" style="left:704.30px;top:663.35px;width:291.70px;height:17.13px;background:#e3efed"></div>
<div class="a" style="left:704.30px;top:697.61px;width:291.70px;height:17.13px;background:#e3efed"></div>
<div class="a" style="left:704.30px;top:731.87px;width:291.70px;height:17.13px;background:#e3efed"></div>
<div class="a" style="left:704.30px;top:766.13px;width:291.70px;height:17.13px;background:#e3efed"></div>
<div class="t" style="left:703.83px;top:582.03px;font-size:10px;color:#111;transform:scaleX(0.9692);">Primärindex</div>
<div class="t" style="left:948.28px;top:582.03px;font-size:10px;color:#111;transform:scaleX(0.9200);">12</div>
<div class="t" style="left:964.18px;top:582.03px;font-size:10px;color:#111;transform:scaleX(0.9200);">L</div>
<div class="t" style="left:704.80px;top:599.16px;font-size:10px;color:#111;transform:scaleX(0.9200);">Jahr</div>
<div class="t" style="left:905.38px;top:599.16px;font-size:10px;color:#111;transform:scaleX(0.9200);">12</div>
<div class="t" style="left:952.88px;top:599.16px;font-size:10px;color:#111;transform:scaleX(0.9200);">4</div>
<div class="t" style="left:964.18px;top:599.16px;font-size:10px;color:#111;transform:scaleX(0.9200);">R</div>
<div class="t" style="left:704.80px;top:616.29px;font-size:10px;color:#111;transform:scaleX(0.9200);">Typ</div>
<div class="t" style="left:905.38px;top:616.29px;font-size:10px;color:#111;transform:scaleX(0.9200);">16</div>
<div class="t" style="left:953.80px;top:616.29px;font-size:10px;color:#111;transform:scaleX(0.9200);">2</div>
<div class="t" style="left:964.18px;top:616.29px;font-size:10px;color:#111;transform:scaleX(0.9200);">R</div>
<div class="t" style="left:703.88px;top:633.42px;font-size:10px;color:#111;transform:scaleX(0.9200);">IndDatum</div>
<div class="t" style="left:905.38px;top:633.42px;font-size:10px;color:#111;transform:scaleX(0.9200);">18</div>
<div class="t" style="left:953.80px;top:633.42px;font-size:10px;color:#111;transform:scaleX(0.9200);">8</div>
<div class="t" style="left:964.18px;top:633.42px;font-size:10px;color:#111;transform:scaleX(0.9200);">R</div>
<div class="t" style="left:704.80px;top:650.55px;font-size:10px;color:#111;transform:scaleX(0.9200);">Satznummer</div>
<div class="t" style="left:905.38px;top:650.55px;font-size:10px;color:#111;transform:scaleX(0.9200);">26</div>
<div class="t" style="left:948.28px;top:650.55px;font-size:10px;color:#111;transform:scaleX(0.9200);">10</div>
<div class="t" style="left:964.18px;top:650.55px;font-size:10px;color:#111;transform:scaleX(0.9200);">R</div>
<div class="t" style="left:703.88px;top:667.68px;font-size:10px;color:#111;transform:scaleX(0.9200);">Kontonummer</div>
<div class="t" style="left:905.38px;top:667.68px;font-size:10px;color:#111;transform:scaleX(0.9200);">36</div>
<div class="t" style="left:953.80px;top:667.68px;font-size:10px;color:#111;transform:scaleX(0.9200);">8</div>
<div class="t" style="left:964.18px;top:667.68px;font-size:10px;color:#111;transform:scaleX(0.9200);">R</div>
<div class="t" style="left:703.82px;top:684.81px;font-size:10px;color:#111;transform:scaleX(0.9782);">Kontenbezeichnung</div>
<div class="t" style="left:905.38px;top:684.81px;font-size:10px;color:#111;transform:scaleX(0.9200);">44</div>
<div class="t" style="left:948.28px;top:684.81px;font-size:10px;color:#111;transform:scaleX(0.9200);">60</div>
<div class="t" style="left:964.18px;top:684.81px;font-size:10px;color:#111;transform:scaleX(0.9200);">L</div>
<div class="t" style="left:703.88px;top:701.94px;font-size:10px;color:#111;transform:scaleX(0.9200);">Belegnummer</div>
<div class="t" style="left:899.86px;top:701.94px;font-size:10px;color:#111;transform:scaleX(0.9200);">104</div>
<div class="t" style="left:953.80px;top:701.94px;font-size:10px;color:#111;transform:scaleX(0.9200);">8</div>
<div class="t" style="left:964.18px;top:701.94px;font-size:10px;color:#111;transform:scaleX(0.9200);">R</div>
<div class="t" style="left:703.88px;top:719.07px;font-size:10px;color:#111;transform:scaleX(0.9200);">Belegnummer2</div>
<div class="t" style="left:900.78px;top:719.07px;font-size:10px;color:#111;transform:scaleX(0.9200);">112</div>
<div class="t" style="left:948.28px;top:719.07px;font-size:10px;color:#111;transform:scaleX(0.9200);">12</div>
<div class="t" style="left:964.18px;top:719.07px;font-size:10px;color:#111;transform:scaleX(0.9200);">L</div>
<div class="t" style="left:703.88px;top:736.20px;font-size:10px;color:#111;transform:scaleX(0.9200);">Fremdbelegnummer</div>
<div class="t" style="left:899.86px;top:736.20px;font-size:10px;color:#111;transform:scaleX(0.9200);">124</div>
<div class="t" style="left:948.28px;top:736.20px;font-size:10px;color:#111;transform:scaleX(0.9200);">30</div>
<div class="t" style="left:964.18px;top:736.20px;font-size:10px;color:#111;transform:scaleX(0.9200);">L</div>
<div class="t" style="left:703.88px;top:753.33px;font-size:10px;color:#111;transform:scaleX(0.9200);">Belegdatum</div>
<div class="t" style="left:899.86px;top:753.33px;font-size:10px;color:#111;transform:scaleX(0.9200);">154</div>
<div class="t" style="left:948.28px;top:753.33px;font-size:10px;color:#111;transform:scaleX(0.9200);">10</div>
<div class="t" style="left:964.18px;top:753.33px;font-size:10px;color:#111;transform:scaleX(0.9200);">D</div>
<div class="t" style="left:704.80px;top:770.46px;font-size:10px;color:#111;transform:scaleX(0.9200);">Valutadatum</div>
<div class="t" style="left:899.86px;top:770.46px;font-size:10px;color:#111;transform:scaleX(0.9200);">164</div>
<div class="t" style="left:948.28px;top:770.46px;font-size:10px;color:#111;transform:scaleX(0.9200);">10</div>
<div class="t" style="left:964.18px;top:770.46px;font-size:10px;color:#111;transform:scaleX(0.9200);">D</div>
<div class="a" style="left:875.60px;top:578.00px;width:1.00px;height:205.26px;background:#d8e4e2"></div>
<div class="a" style="left:918.40px;top:578.00px;width:1.00px;height:205.26px;background:#d8e4e2"></div>
<div class="a" style="left:961.90px;top:578.00px;width:1.00px;height:205.26px;background:#d8e4e2"></div>
<svg style="left:996px;top:580px" width="16" height="210" viewBox="0 0 16 210"><rect x="4.5" y="1.5" width="7" height="1.5" fill="#c2c6be"/><path d="M4 8.5 L8 3.8 L12 8.5 Z" fill="#c2c6be"/><path d="M4 18.5 L8 15 L12 18.5 H9.3 V21.5 H6.7 V18.5 Z" fill="#c2c6be"/><rect x="3.5" y="44.5" width="9" height="4" fill="none" stroke="#c2c6be" stroke-width="0.8"/><rect x="1.5" y="48.5" width="13" height="7" rx="1" fill="none" stroke="#c2c6be" stroke-width="0.8"/><rect x="4.5" y="53.5" width="7" height="5" fill="#fbfcf4" stroke="#c2c6be" stroke-width="0.8"/><rect x="1" y="61.5" width="14" height="1.2" fill="#c2c6be"/><path d="M2 78 L6 73 L9 75 L13.5 66.5" fill="none" stroke="#c2c6be" stroke-width="0.8" stroke-dasharray="1 1"/><path d="M2 80 V79 M4.5 80 V76 M7 80 V75 M9.5 80 V73 M12 80 V70 M1.5 80.3 H14.5" stroke="#c2c6be" stroke-width="1"/><rect x="1" y="82.5" width="14" height="1.2" fill="#c2c6be"/><g fill="none" stroke="#c2c6be" stroke-width="0.7"><circle cx="3" cy="88.5" r="1.5"/><circle cx="8" cy="88.5" r="1.5"/><circle cx="13" cy="88.5" r="1.5"/><circle cx="3" cy="93.5" r="1.5"/><circle cx="8" cy="93.5" r="1.5"/><circle cx="13" cy="93.5" r="1.5"/><circle cx="3" cy="98.5" r="1.5"/><circle cx="8" cy="98.5" r="1.5"/></g><rect x="1" y="103.5" width="14" height="1.2" fill="#c2c6be"/><rect x="1.5" y="107.5" width="13" height="13" fill="none" stroke="#c2c6be"/><rect x="1.5" y="107.5" width="13" height="3" fill="#c2c6be"/><rect x="6.5" y="112" width="7.5" height="7.5" fill="none" stroke="#a8ada5" stroke-width="1.2"/><path d="M12.5 113.5 H8.5 L10.5 115.8 L8.5 118 H12.5" fill="none" stroke="#a8ada5"/><rect x="1" y="124" width="14" height="1.2" fill="#c2c6be"/><rect x="1.5" y="127.5" width="13" height="13" fill="none" stroke="#c2c6be"/><path d="M1.5 131 H14.5 M1.5 134.5 H14.5 M1.5 138 H14.5 M5 127.5 V140.5 M8.5 127.5 V140.5 M12 127.5 V140.5" stroke="#c2c6be" stroke-width="0.8"/><rect x="1" y="145" width="14" height="1.2" fill="#c2c6be"/><path d="M1.5 148.5 H14.5 V150.5 L9 157 V162 L7 163 V157 L1.5 150.5 Z" fill="none" stroke="#c2c6be"/><path d="M6.7 184.5 V187.5 H4 L8 191 L12 187.5 H9.3 V184.5 Z" fill="#c2c6be"/><path d="M4 197.5 L8 202.2 L12 197.5 Z" fill="#c2c6be"/><rect x="4.5" y="203.5" width="7" height="1.5" fill="#c2c6be"/></svg>
</body></html>
